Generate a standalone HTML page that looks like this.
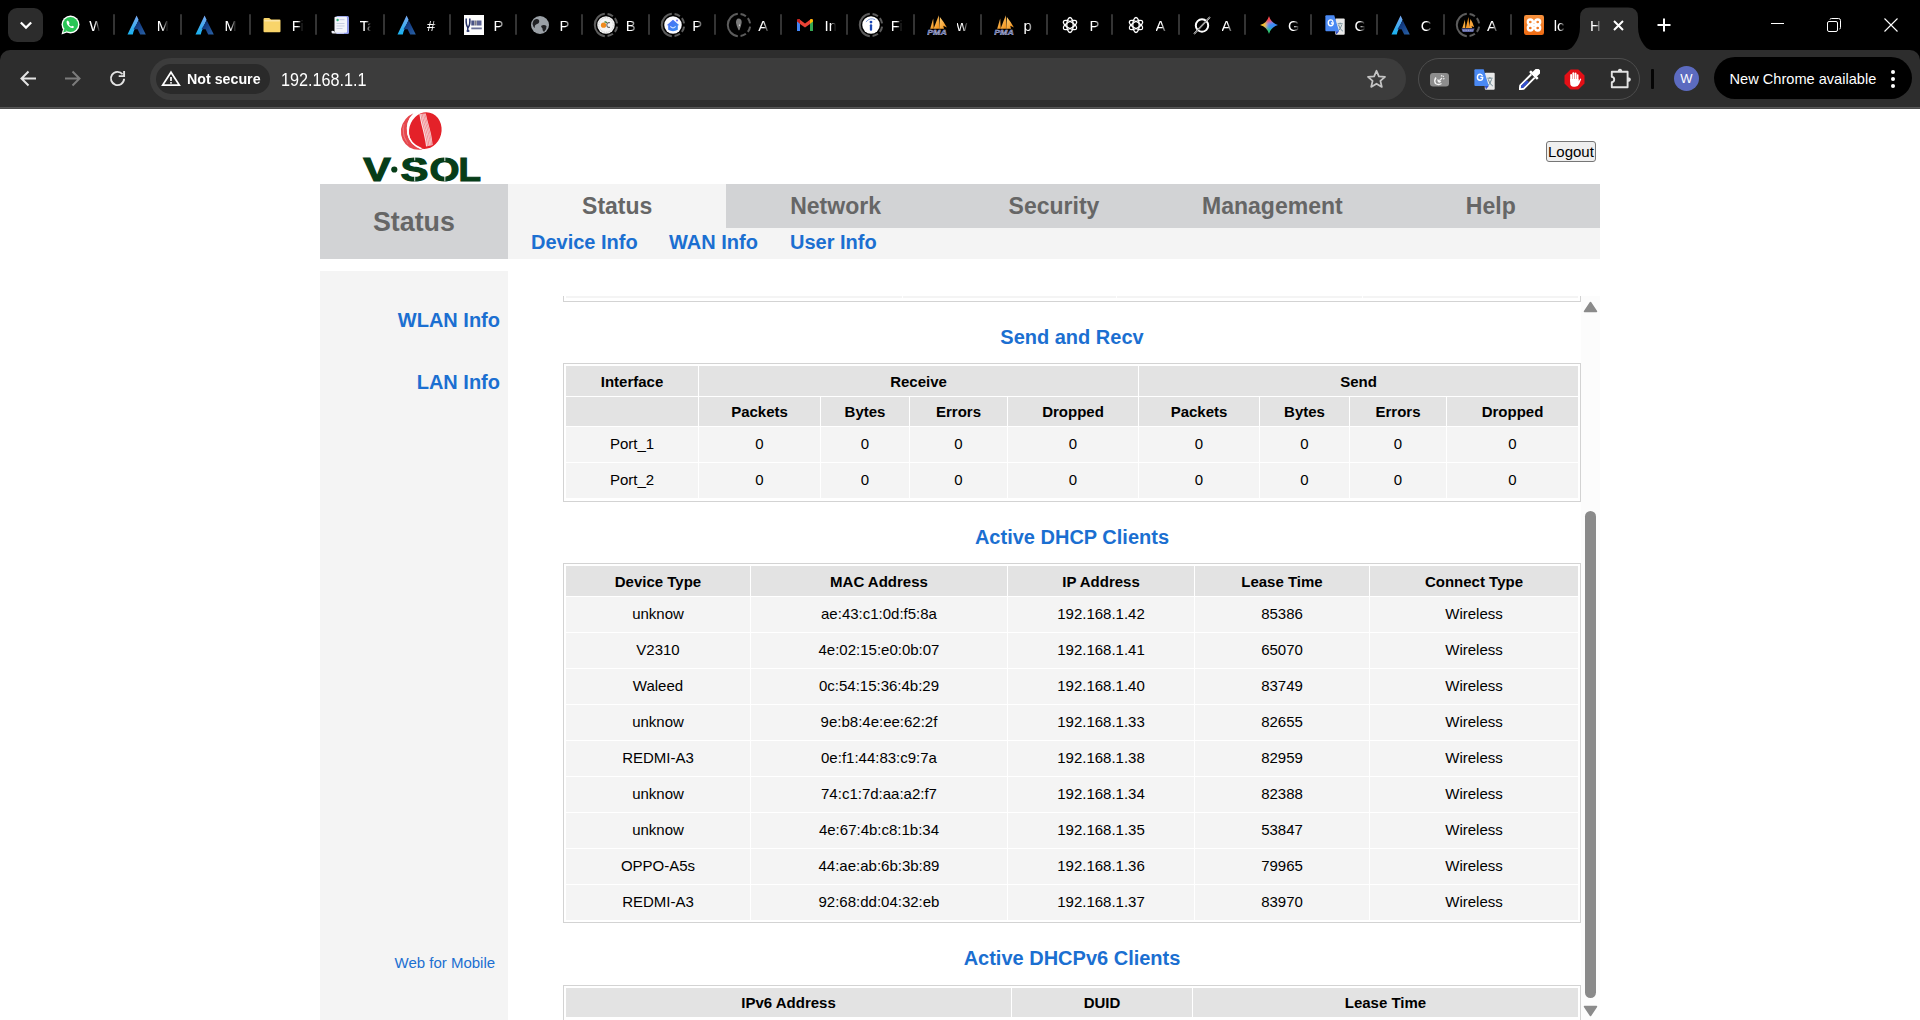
<!DOCTYPE html><html><head><meta charset='utf-8'><title>V-SOL</title><style>
*{box-sizing:border-box}
html,body{margin:0;padding:0}
body{width:1920px;height:1020px;overflow:hidden;position:relative;background:#fff;font-family:"Liberation Sans",sans-serif}
.a{position:absolute}
.sep{position:absolute;top:14px;width:2px;height:20.5px;background:#343434;border-radius:1px}
.tt{position:absolute;top:15.5px;font-size:15px;color:#fff;line-height:20px;white-space:nowrap;overflow:hidden;width:11px;-webkit-mask-image:linear-gradient(90deg,#000 50%,transparent 100%)}
.ic{position:absolute;top:15px;width:20px;height:20px}
table.t{position:absolute;border:1px solid #d3d3d3;padding:1px;border-spacing:1px;table-layout:fixed;font-size:15px;color:#000;border-collapse:separate}
table.t td{text-align:center;vertical-align:middle;padding:0;white-space:nowrap;overflow:hidden}
table.t td.h{background:#e3e3e3;font-weight:bold}
table.t td.d{background:#f4f4f4;padding-bottom:2px}
.ttl{position:absolute;width:1018px;text-align:center;font-size:20px;font-weight:bold;color:#1b6fd1;line-height:20px;white-space:nowrap}
.tx{position:absolute;white-space:nowrap}
</style></head><body><div class='a' style='left:0;top:0;width:1920px;height:62px;background:#000'></div><div class='a' style='left:8px;top:8px;width:35px;height:34px;background:#2c2c2c;border-radius:9px'></div><svg class='a' style='left:18px;top:17px' width='16' height='16' viewBox='0 0 16 16'><path d='M3.6 6.2 L8 10.6 L12.4 6.2' fill='none' stroke='#fff' stroke-width='2.2' stroke-linecap='square'/></svg><svg class='ic' style='left:59.6px' viewBox='0 0 20 20'><circle cx='10.5' cy='9.5' r='9' fill='#fff'/><path d='M1.5 19.5 L3 14 L7 17.5Z' fill='#fff'/><circle cx='10.5' cy='9.5' r='7.6' fill='#29c556'/><path d='M3.2 17.6 L4.3 13.8 L6.8 16.2Z' fill='#29c556'/><path d='M7.6 5.6c-.5.2-1 .9-1 1.6 0 2.2 2.6 5.2 5.4 5.9.8.2 1.6-.3 1.8-.9l.1-.6-1.8-.9-.8.8c-.9-.3-2-1.3-2.4-2.3l.7-.8-.8-1.9z' fill='#fff'/></svg><div class='tt' style='left:89.2px'>W</div><div class='sep' style='left:113.3px'></div><svg class='ic' style='left:127.1px' viewBox='0 0 20 20'><defs><linearGradient id='ag1' x1='0' y1='0' x2='0' y2='1'><stop offset='0' stop-color='#7aa7f2'/><stop offset='1' stop-color='#17b2ef'/></linearGradient><linearGradient id='ag2' x1='0' y1='0' x2='1' y2='1'><stop offset='0' stop-color='#06256a'/><stop offset='1' stop-color='#2a63a8'/></linearGradient></defs><path d='M9.6 0.5 L11.6 4.8 L6.5 16.8 L5.8 19.5 L0.5 19.5 Z' fill='url(#ag1)'/><path d='M11.8 5.5 L18.8 19.5 L13.2 19.5 L10.6 14.2 L6.4 14.2 Z' fill='url(#ag2)'/></svg><div class='tt' style='left:156.7px'>M</div><div class='sep' style='left:180.2px'></div><svg class='ic' style='left:195.0px' viewBox='0 0 20 20'><defs><linearGradient id='ag1' x1='0' y1='0' x2='0' y2='1'><stop offset='0' stop-color='#7aa7f2'/><stop offset='1' stop-color='#17b2ef'/></linearGradient><linearGradient id='ag2' x1='0' y1='0' x2='1' y2='1'><stop offset='0' stop-color='#06256a'/><stop offset='1' stop-color='#2a63a8'/></linearGradient></defs><path d='M9.6 0.5 L11.6 4.8 L6.5 16.8 L5.8 19.5 L0.5 19.5 Z' fill='url(#ag1)'/><path d='M11.8 5.5 L18.8 19.5 L13.2 19.5 L10.6 14.2 L6.4 14.2 Z' fill='url(#ag2)'/></svg><div class='tt' style='left:224.6px'>M</div><div class='sep' style='left:248.6px'></div><svg class='ic' style='left:262.1px' viewBox='0 0 20 20'><path d='M1.5 4.2 Q1.5 3 2.7 3 L7.2 3 L9 4.6 L17.5 4.6 Q18.5 4.6 18.5 5.6 L18.5 16.2 Q18.5 17.2 17.5 17.2 L2.5 17.2 Q1.5 17.2 1.5 16.2 Z' fill='#f8d46a'/><rect x='2.2' y='5.2' width='15.6' height='1.2' fill='#fbe9b7'/></svg><div class='tt' style='left:291.7px'>Fi</div><div class='sep' style='left:315.1px'></div><svg class='ic' style='left:330.0px' viewBox='0 0 20 20'><rect x='6' y='1' width='13' height='18' rx='1.5' fill='#8b97e6'/><rect x='4.5' y='1.8' width='12.5' height='16' rx='1' fill='#f2f4fb'/><path d='M1.5 16 Q4 15 5 17.5 L14 17.5 L14 18.5 L3 18.5 Q1.5 18.5 1.5 17Z' fill='#eef0f8'/><circle cx='7.6' cy='5' r='1.2' fill='#34b27d'/><rect x='9.5' y='4.2' width='5' height='1' fill='#c5cbe0'/><rect x='6.5' y='8' width='8' height='.9' fill='#c5cbe0'/><rect x='6.5' y='10.5' width='8' height='.9' fill='#c5cbe0'/><rect x='6.5' y='13' width='6' height='.9' fill='#c5cbe0'/></svg><div class='tt' style='left:359.6px'>Ta</div><div class='sep' style='left:383.4px'></div><svg class='ic' style='left:397.4px' viewBox='0 0 20 20'><defs><linearGradient id='ag1' x1='0' y1='0' x2='0' y2='1'><stop offset='0' stop-color='#7aa7f2'/><stop offset='1' stop-color='#17b2ef'/></linearGradient><linearGradient id='ag2' x1='0' y1='0' x2='1' y2='1'><stop offset='0' stop-color='#06256a'/><stop offset='1' stop-color='#2a63a8'/></linearGradient></defs><path d='M9.6 0.5 L11.6 4.8 L6.5 16.8 L5.8 19.5 L0.5 19.5 Z' fill='url(#ag1)'/><path d='M11.8 5.5 L18.8 19.5 L13.2 19.5 L10.6 14.2 L6.4 14.2 Z' fill='url(#ag2)'/></svg><div class='tt' style='left:427.0px'>#</div><div class='sep' style='left:449.0px'></div><svg class='ic' style='left:464.0px' viewBox='0 0 20 20'><defs><filter id='imf'><feGaussianBlur stdDeviation='.45'/></filter></defs><rect x='0' y='0' width='20' height='20' fill='#fdfdfd'/><g filter='url(#imf)'><path d='M2.2 3.5 Q1.8 10 3.8 12.5 L3.8 15.5 M5.8 3.5 Q6.3 10 4.2 12.5' stroke='#253066' stroke-width='1.5' fill='none'/><ellipse cx='4' cy='16' rx='1.6' ry='1' fill='#253066'/><rect x='7.3' y='5.5' width='3' height='5' fill='#4a5386'/><rect x='10.5' y='5.5' width='2.2' height='5' fill='#7a7a86'/><rect x='13' y='5.5' width='4.5' height='5' fill='#5b6494'/><rect x='7.3' y='12.5' width='10.5' height='1.8' fill='#6a7098'/></g></svg><div class='tt' style='left:493.6px'>P</div><div class='sep' style='left:515.1px'></div><svg class='ic' style='left:530.0px' viewBox='0 0 20 20'><circle cx='10' cy='10' r='9' fill='#9aa0a6'/><path d='M4 5 Q7 3 9 5 Q10 8 7 9 Q4 10 5 13 Q3 12 2.5 9 Q2.8 6.5 4 5Z M11 11 Q14 9 16.5 11 Q17 14 14 17 Q12 15 12.5 13.5 Q11.5 12.5 11 11Z' fill='#202124'/></svg><div class='tt' style='left:559.6px'>P</div><div class='sep' style='left:581.2px'></div><svg class='a' style='left:593.2px;top:12px' width='26' height='26' viewBox='-3 -3 26 26'><path d='M8.83 21.14 A11.2 11.2 0 0 1 8.83 -1.14 M11.56 -1.09 A11.2 11.2 0 0 1 16.90 1.17 M18.83 3.10 A11.2 11.2 0 0 1 21.09 8.44 M21.09 11.56 A11.2 11.2 0 0 1 18.83 16.90 M16.90 18.83 A11.2 11.2 0 0 1 11.56 21.09' fill='none' stroke='#5c5c5c' stroke-width='2'/><g transform='translate(10 10) scale(.875) translate(-10 -10)'><circle cx='10' cy='10' r='10' fill='#f4f4f4'/><circle cx='10' cy='10' r='8.3' fill='none' stroke='#b8b8b8' stroke-width='1' stroke-dasharray='1 1'/><circle cx='7.2' cy='10.2' r='3' fill='#f08a1c'/><path d='M8.2 6.8 Q9.8 6 10.8 7.8' stroke='#3d7a2a' stroke-width='1.4' fill='none'/><path d='M14.5 7.5 Q11 6.5 11 10 Q11 13.5 14.5 12.5' stroke='#666' stroke-width='1.3' fill='none'/></g></svg><div class='tt' style='left:625.8px'>B</div><div class='sep' style='left:648.3px'></div><svg class='a' style='left:659.6px;top:12px' width='26' height='26' viewBox='-3 -3 26 26'><path d='M8.83 21.14 A11.2 11.2 0 0 1 8.83 -1.14 M11.56 -1.09 A11.2 11.2 0 0 1 16.90 1.17 M18.83 3.10 A11.2 11.2 0 0 1 21.09 8.44 M21.09 11.56 A11.2 11.2 0 0 1 18.83 16.90 M16.90 18.83 A11.2 11.2 0 0 1 11.56 21.09' fill='none' stroke='#5c5c5c' stroke-width='2'/><g transform='translate(10 10) scale(.875) translate(-10 -10)'><circle cx='10' cy='10' r='10' fill='#fbfbff'/><defs><linearGradient id='hg' x1='0' y1='0' x2='1' y2='1'><stop offset='0' stop-color='#4b6cf7'/><stop offset='1' stop-color='#3b8ff0'/></linearGradient></defs><path d='M2.8 10.2 L10 4 L17.2 10.2 L15.5 10.2 L15.5 15.5 Q10 18.5 4.5 15.5 L4.5 10.2Z' fill='url(#hg)'/><circle cx='14.6' cy='4.8' r='1.1' fill='#6b6cf0'/><path d='M7 11.5 Q10 15 13 11.5' stroke='#cfe0ff' stroke-width='1.3' fill='none'/></g></svg><div class='tt' style='left:692.2px'>P</div><div class='sep' style='left:714.3px'></div><svg class='a' style='left:725.6px;top:12px' width='26' height='26' viewBox='-3 -3 26 26'><path d='M8.83 21.14 A11.2 11.2 0 0 1 8.83 -1.14 M11.56 -1.09 A11.2 11.2 0 0 1 16.90 1.17 M18.83 3.10 A11.2 11.2 0 0 1 21.09 8.44 M21.09 11.56 A11.2 11.2 0 0 1 18.83 16.90 M16.90 18.83 A11.2 11.2 0 0 1 11.56 21.09' fill='none' stroke='#5c5c5c' stroke-width='2'/><g transform='translate(10 10) scale(.875) translate(-10 -10)'><path d='M9.4 2.5 Q13.5 2.8 13 7.5 Q12.5 11 10.6 15.8 Q9.8 16.5 9.3 15.5 Q7 10.5 6.6 7.3 Q6.5 2.7 9.4 2.5Z' fill='#7a7a7a'/><path d='M10.5 8.5 L11.3 11.5 L9.8 10.5Z' fill='#e0e0e0'/></g></svg><div class='tt' style='left:758.2px'>A</div><div class='sep' style='left:780.3px'></div><svg class='ic' style='left:795.0px' viewBox='0 0 20 20'><path d='M2 5.5 L2 16 L5 16 L5 9 L10 12.5 L15 9 L15 16 L18 16 L18 5.5 Q18 3.5 16 4 L10 8.5 L4 4 Q2 3.5 2 5.5Z' fill='#ea4335'/><path d='M2 5.5 L2 16 L5 16 L5 8.5Z' fill='#4285f4'/><path d='M15 8.5 L15 16 L18 16 L18 5.5Z' fill='#34a853'/><path d='M15 8.7 L18 6.4 L18 5.5 Q18 3.5 16 4 L15 4.8Z' fill='#fbbc04'/><path d='M2 5.5 Q2 3.5 4 4 L5 4.8 L5 8.7 L2 6.4Z' fill='#c5221f'/></svg><div class='tt' style='left:824.6px'>In</div><div class='sep' style='left:846.4px'></div><svg class='a' style='left:858.1px;top:12px' width='26' height='26' viewBox='-3 -3 26 26'><path d='M8.83 21.14 A11.2 11.2 0 0 1 8.83 -1.14 M11.56 -1.09 A11.2 11.2 0 0 1 16.90 1.17 M18.83 3.10 A11.2 11.2 0 0 1 21.09 8.44 M21.09 11.56 A11.2 11.2 0 0 1 18.83 16.90 M16.90 18.83 A11.2 11.2 0 0 1 11.56 21.09' fill='none' stroke='#5c5c5c' stroke-width='2'/><g transform='translate(10 10) scale(.875) translate(-10 -10)'><circle cx='10' cy='10' r='10' fill='#fff'/><circle cx='10' cy='6.6' r='1.6' fill='#1c49b5'/><rect x='8.7' y='9' width='2.6' height='7.5' rx='1.2' fill='#1c49b5'/><path d='M4.2 6.5 Q9 0.8 14.8 4' stroke='#6f8fd8' stroke-width='1' fill='none'/></g></svg><div class='tt' style='left:890.7px'>Fi</div><div class='sep' style='left:913.2px'></div><svg class='ic' style='left:927.0px' viewBox='0 0 20 20'><defs><linearGradient id='pmg' x1='0' y1='0' x2='1' y2='1'><stop offset='0' stop-color='#ffd27a'/><stop offset='1' stop-color='#f08a10'/></linearGradient></defs><path d='M3.2 13.8 L6.2 3.4 L6.8 13.8Z' fill='url(#pmg)'/><path d='M6.6 13.8 L11.8 0.3 L12.6 13.8Z' fill='url(#pmg)'/><path d='M12.4 13.8 L12.9 1.9 Q17 7 19.9 12.4 L16.3 10.8 L17 13.8Z' fill='url(#pmg)'/><text x='0.2' y='19.6' font-family='Liberation Sans' font-size='7.4' font-weight='bold' font-style='italic' fill='#4a5498' stroke='#c8cce6' stroke-width='.35' textLength='19.6' lengthAdjust='spacingAndGlyphs'>PMA</text></svg><div class='tt' style='left:956.6px'>w</div><div class='sep' style='left:979.5px'></div><svg class='ic' style='left:993.8px' viewBox='0 0 20 20'><defs><linearGradient id='pmg' x1='0' y1='0' x2='1' y2='1'><stop offset='0' stop-color='#ffd27a'/><stop offset='1' stop-color='#f08a10'/></linearGradient></defs><path d='M3.2 13.8 L6.2 3.4 L6.8 13.8Z' fill='url(#pmg)'/><path d='M6.6 13.8 L11.8 0.3 L12.6 13.8Z' fill='url(#pmg)'/><path d='M12.4 13.8 L12.9 1.9 Q17 7 19.9 12.4 L16.3 10.8 L17 13.8Z' fill='url(#pmg)'/><text x='0.2' y='19.6' font-family='Liberation Sans' font-size='7.4' font-weight='bold' font-style='italic' fill='#4a5498' stroke='#c8cce6' stroke-width='.35' textLength='19.6' lengthAdjust='spacingAndGlyphs'>PMA</text></svg><div class='tt' style='left:1023.4px'>p</div><div class='sep' style='left:1045.6px'></div><svg class='ic' style='left:1059.9px' viewBox='0 0 20 20'><g fill='none' stroke='#fff' stroke-width='1.3'><ellipse cx='10' cy='10' rx='3.2' ry='7.5'/><ellipse cx='10' cy='10' rx='3.2' ry='7.5' transform='rotate(60 10 10)'/><ellipse cx='10' cy='10' rx='3.2' ry='7.5' transform='rotate(120 10 10)'/></g></svg><div class='tt' style='left:1089.5px'>P</div><div class='sep' style='left:1111.4px'></div><svg class='ic' style='left:1125.9px' viewBox='0 0 20 20'><g fill='none' stroke='#fff' stroke-width='1.3'><ellipse cx='10' cy='10' rx='3.2' ry='7.5'/><ellipse cx='10' cy='10' rx='3.2' ry='7.5' transform='rotate(60 10 10)'/><ellipse cx='10' cy='10' rx='3.2' ry='7.5' transform='rotate(120 10 10)'/></g></svg><div class='tt' style='left:1155.5px'>A</div><div class='sep' style='left:1178.0px'></div><svg class='ic' style='left:1192.0px' viewBox='0 0 20 20'><circle cx='10' cy='10.5' r='6.2' fill='none' stroke='#fff' stroke-width='2'/><path d='M2 19 L18 2' stroke='#fff' stroke-width='1.6'/><path d='M2 19 L18 2' stroke='#000' stroke-width='.6'/></svg><div class='tt' style='left:1221.6px'>A</div><div class='sep' style='left:1244.4px'></div><svg class='ic' style='left:1258.5px' viewBox='0 0 20 20'><defs><clipPath id='gmc'><path d='M10 1 Q12 8 19 10 Q12 12 10 19 Q8 12 1 10 Q8 8 10 1Z'/></clipPath><filter id='gmf' x='-20%' y='-20%' width='140%' height='140%'><feGaussianBlur stdDeviation='1.6'/></filter></defs><g clip-path='url(#gmc)'><g filter='url(#gmf)'><path d='M0 0 L20 0 L10 10Z' fill='#f4474a'/><path d='M0 0 L0 20 L10 10Z' fill='#f7c12a'/><path d='M0 20 L20 20 L10 10Z' fill='#2fc26b'/><path d='M20 0 L20 20 L10 10Z' fill='#3a8cf6'/><circle cx='11' cy='10.5' r='3.5' fill='#3a8cf6'/></g></g></svg><div class='tt' style='left:1288.1px'>G</div><div class='sep' style='left:1310.0px'></div><svg class='ic' style='left:1324.8px' viewBox='0 0 20 20'><svg viewBox='0 0 21 21' width='20' height='20'><rect x='10.8' y='3.8' width='9.9' height='17' rx='1' fill='#e9e9e9'/><path d='M13.3 9.2 L18.6 9.2 M15.9 8 L15.9 9.2 M14.2 10.3 Q15.6 15.5 18.8 17 M17.6 10.3 Q16.1 15.5 13.4 17' stroke='#6f8a96' stroke-width='1' fill='none'/><path d='M1.4 0.2 L9.7 0.2 L14.75 17 L1.4 17 Q0.4 17 0.4 16 L0.4 1.2 Q0.4 0.2 1.4 0.2Z' fill='#4a89f3'/><path d='M10.8 17 L14.75 17 L12 20.6Z' fill='#3450c8'/><path d='M8.4 7.2 Q7.9 5.2 6.1 5.2 Q3.4 5.2 3.4 8.2 Q3.4 11.3 6.1 11.3 Q8.6 11.3 8.7 8.4 L6.3 8.4' stroke='#fff' stroke-width='1.4' fill='none'/></svg></svg><div class='tt' style='left:1354.4px'>G</div><div class='sep' style='left:1376.4px'></div><svg class='ic' style='left:1391.1px' viewBox='0 0 20 20'><defs><linearGradient id='ag1' x1='0' y1='0' x2='0' y2='1'><stop offset='0' stop-color='#7aa7f2'/><stop offset='1' stop-color='#17b2ef'/></linearGradient><linearGradient id='ag2' x1='0' y1='0' x2='1' y2='1'><stop offset='0' stop-color='#06256a'/><stop offset='1' stop-color='#2a63a8'/></linearGradient></defs><path d='M9.6 0.5 L11.6 4.8 L6.5 16.8 L5.8 19.5 L0.5 19.5 Z' fill='url(#ag1)'/><path d='M11.8 5.5 L18.8 19.5 L13.2 19.5 L10.6 14.2 L6.4 14.2 Z' fill='url(#ag2)'/></svg><div class='tt' style='left:1420.7px'>C</div><div class='sep' style='left:1443.2px'></div><svg class='a' style='left:1454.5px;top:12px' width='26' height='26' viewBox='-3 -3 26 26'><path d='M8.83 21.14 A11.2 11.2 0 0 1 8.83 -1.14 M11.56 -1.09 A11.2 11.2 0 0 1 16.90 1.17 M18.83 3.10 A11.2 11.2 0 0 1 21.09 8.44 M21.09 11.56 A11.2 11.2 0 0 1 18.83 16.90 M16.90 18.83 A11.2 11.2 0 0 1 11.56 21.09' fill='none' stroke='#5c5c5c' stroke-width='2'/><g transform='translate(10 10) scale(.875) translate(-10 -10)'><path d='M3.5 13.5 L6.5 3.8 L7 13.5Z' fill='#f6a83c'/><path d='M7.5 13.5 L10.5 0.8 L11.6 13.5Z' fill='#f49a28'/><path d='M11 13.5 L12.8 3 Q15.5 7 17 12.5 L14 11 L14.8 13.5Z' fill='#f7a43a'/><path d='M2.5 14 L17.5 14 L16 18 L4 18Z' fill='#6a72b8' opacity='.9'/><path d='M4 16 L16 16' stroke='#c9cde8' stroke-width='.8' stroke-dasharray='1.2 .8'/></g></svg><div class='tt' style='left:1487.1px'>A</div><div class='sep' style='left:1509.5px'></div><svg class='ic' style='left:1524.1px' viewBox='0 0 20 20'><defs><linearGradient id='xg' x1='0' y1='0' x2='0' y2='1'><stop offset='0' stop-color='#f7923e'/><stop offset='1' stop-color='#ee6a12'/></linearGradient></defs><rect x='0' y='0' width='20' height='20' rx='2.2' fill='url(#xg)'/><g fill='none' stroke='#fff' stroke-width='2.3'><circle cx='6.3' cy='7' r='2.5'/><circle cx='13.7' cy='7' r='2.5'/><circle cx='6.3' cy='13' r='2.5'/><circle cx='13.7' cy='13' r='2.5'/><path d='M8.8 7 L11.2 7 M8.8 13 L11.2 13 M6.3 9.5 L6.3 10.5 M13.7 9.5 L13.7 10.5'/></g><path d='M8.2 9 L11.8 9 L11.8 11 L8.2 11Z' fill='#fff'/></svg><div class='tt' style='left:1553.7px'>lc</div><svg class='a' style='left:1560px;top:7px' width='100' height='44' viewBox='0 0 100 44'><path d='M0 44 Q10 44 14 38 Q20 30 20 20 L20 10 Q20 0.5 30 0.5 L68 0.5 Q78 0.5 78 10 L78 20 Q78 30 84 38 Q88 44 98 44 Z' fill='#2d2d2d'/></svg><div class='tt' style='left:1590px;width:11px'>H</div><svg class='a' style='left:1612px;top:19px' width='13' height='13' viewBox='0 0 13 13'><path d='M2 2 L11 11 M11 2 L2 11' stroke='#fff' stroke-width='2'/></svg><svg class='a' style='left:1657px;top:18px' width='14' height='14' viewBox='0 0 14 14'><path d='M7 0.5 V13.5 M0.5 7 H13.5' stroke='#fff' stroke-width='2'/></svg><div class='a' style='left:1771px;top:23px;width:13px;height:1px;background:#fff'></div><svg class='a' style='left:1826px;top:17px' width='16' height='16' viewBox='0 0 16 16'><rect x='1.5' y='4.5' width='10' height='10' rx='1.5' fill='none' stroke='#fff' stroke-width='1'/><path d='M4 2.5 Q4 1.5 5.5 1.5 L12.5 1.5 Q14.5 1.5 14.5 3.5 L14.5 10.5 Q14.5 12 13.5 12' fill='none' stroke='#fff' stroke-width='1'/></svg><svg class='a' style='left:1883px;top:17px' width='16' height='16' viewBox='0 0 16 16'><path d='M1.5 1.5 L14.5 14.5 M14.5 1.5 L1.5 14.5' stroke='#fff' stroke-width='1.1'/></svg><div class='a' style='left:0;top:50px;width:1920px;height:57px;background:#2d2d2d;border-radius:10px 10px 0 0'></div><div class='a' style='left:0;top:107px;width:1920px;height:1px;background:#565656'></div><div class='a' style='left:0;top:108px;width:1920px;height:1px;background:#4b4b4b'></div><svg class='a' style='left:18.8px;top:69px' width='19' height='19' viewBox='0 0 19 19'><path d='M17 9.5 H3 M9.5 2.5 L2.5 9.5 L9.5 16.5' fill='none' stroke='#e3e3e3' stroke-width='2'/></svg><svg class='a' style='left:63px;top:69px' width='19' height='19' viewBox='0 0 19 19'><path d='M2 9.5 H16 M9.5 2.5 L16.5 9.5 L9.5 16.5' fill='none' stroke='#7c7c7c' stroke-width='2'/></svg><svg class='a' style='left:108px;top:69px' width='19' height='19' viewBox='0 0 19 19'><path d='M14.56 5.26 A6.6 6.6 0 1 0 16.1 9.73' fill='none' stroke='#e3e3e3' stroke-width='1.9'/><path d='M16.1 1.9 L16.1 7.1 L10.7 7.1' fill='none' stroke='#e3e3e3' stroke-width='1.9'/></svg><div class='a' style='left:150px;top:58px;width:1256px;height:42px;background:#3c3c3c;border-radius:21px'></div><div class='a' style='left:156px;top:64px;width:114px;height:30px;background:#2a2a2a;border-radius:15px'></div><svg class='a' style='left:161px;top:70px' width='20' height='17' viewBox='0 0 20 17'><path d='M10 2.2 L18.3 15.1 L1.7 15.1 Z' fill='none' stroke='#fff' stroke-width='1.75' stroke-linejoin='miter'/><rect x='9.15' y='7' width='1.7' height='4' fill='#fff'/><rect x='9.15' y='12.1' width='1.7' height='1.5' fill='#fff'/></svg><div class='tx' style='left:186.6px;top:71.06px;font-size:15.4px;line-height:15.4px;color:#fff;font-weight:bold;transform:scaleX(0.925);transform-origin:0 0'>Not secure</div><div class='tx' style='left:280.6px;top:71.50px;font-size:17.6px;line-height:17.6px;color:#fff;font-weight:normal;transform:scaleX(0.92);transform-origin:0 0'>192.168.1.1</div><svg class='a' style='left:1366px;top:69px' width='21' height='20' viewBox='0 0 21 20'><path d='M10.5 1.8 L12.9 7.4 L19 7.9 L14.4 11.9 L15.8 17.9 L10.5 14.7 L5.2 17.9 L6.6 11.9 L2 7.9 L8.1 7.4 Z' fill='none' stroke='#c4c4c4' stroke-width='1.8' stroke-linejoin='round'/></svg><div class='a' style='left:1418px;top:58px;width:222px;height:42px;border:1px solid #4d4d4d;border-radius:21px'></div><svg class='a' style='left:1430px;top:73px' width='19' height='14' viewBox='0 0 19 14'><rect x='0' y='0' width='19' height='13.5' rx='3' fill='#8d8d8d'/><path d='M6 4.5 Q3.8 7.5 5.5 10.5 Q8.5 12.5 11.5 10.5' fill='none' stroke='#f2f2f2' stroke-width='1.5'/><path d='M7.5 6 Q6.8 8.5 8.5 9.5 Q10.5 10 11.3 8.5Z' fill='#f2f2f2'/><path d='M9.5 7.5 L12 5 M11 3.3 L12.2 2.2 M13 6 L14.5 5.5 M12.8 3.8 L13.8 3' stroke='#f2f2f2' stroke-width='1.1'/></svg><svg class='a' style='left:1474px;top:69px' width='21' height='21' viewBox='0 0 20 20'><svg viewBox='0 0 21 21' width='20' height='20'><rect x='10.8' y='3.8' width='9.9' height='17' rx='1' fill='#e9e9e9'/><path d='M13.3 9.2 L18.6 9.2 M15.9 8 L15.9 9.2 M14.2 10.3 Q15.6 15.5 18.8 17 M17.6 10.3 Q16.1 15.5 13.4 17' stroke='#6f8a96' stroke-width='1' fill='none'/><path d='M1.4 0.2 L9.7 0.2 L14.75 17 L1.4 17 Q0.4 17 0.4 16 L0.4 1.2 Q0.4 0.2 1.4 0.2Z' fill='#4a89f3'/><path d='M10.8 17 L14.75 17 L12 20.6Z' fill='#3450c8'/><path d='M8.4 7.2 Q7.9 5.2 6.1 5.2 Q3.4 5.2 3.4 8.2 Q3.4 11.3 6.1 11.3 Q8.6 11.3 8.7 8.4 L6.3 8.4' stroke='#fff' stroke-width='1.4' fill='none'/></svg></svg><svg class='a' style='left:1519px;top:69px' width='21' height='21' viewBox='0 0 21 21'><g transform='rotate(45 10.5 10.5)'><rect x='7.4' y='-3.4' width='6.2' height='6.8' rx='.6' fill='#fff'/><rect x='5' y='3' width='11' height='2.6' rx='.8' fill='#fff'/><path d='M8.1 5.5 L8.1 21.2 L10.5 24.3 L12.9 21.2 L12.9 5.5' fill='#2d2d2d' stroke='#fff' stroke-width='1.9' stroke-linejoin='round'/><path d='M9.1 12.8 L11.9 12.8 L11.9 20.9 L10.5 22.7 L9.1 20.9Z' fill='#3451d1'/></g></svg><svg class='a' style='left:1564px;top:69px' width='21' height='21' viewBox='0 0 21 21'><path d='M6.6 0.5 L14.4 0.5 L20.5 6.6 L20.5 14.4 L14.4 20.5 L6.6 20.5 L0.5 14.4 L0.5 6.6Z' fill='#e30f16'/><g fill='#fff'><rect x='6.2' y='5' width='1.9' height='8' rx='.95'/><rect x='8.4' y='3.3' width='1.9' height='9' rx='.95'/><rect x='10.6' y='3.6' width='1.9' height='9' rx='.95'/><rect x='12.7' y='5.2' width='1.8' height='8' rx='.9'/><path d='M6.2 10 L14.5 10 L14.5 12.5 L16.2 9.8 Q17 9.3 17.2 10.2 L15.2 15 Q14 17.8 11 17.8 L9.6 17.8 Q6.2 17.8 6.2 14Z'/></g></svg><svg class='a' style='left:1609px;top:68px' width='24' height='23' viewBox='0 0 24 23'><path d='M2.8 3.8 L18.6 3.8 L18.6 19.2 L2.8 19.2 L2.8 14.2 Q5.2 13.8 5.2 11.5 Q5.2 9.2 2.8 8.8 Z' fill='none' stroke='#e3e3e3' stroke-width='1.9' stroke-linejoin='round'/><path d='M8.8 3.6 Q8.8 0.8 11 0.8 Q13.2 0.8 13.2 3.6Z' fill='#e3e3e3'/><path d='M18.5 9.2 Q21.8 9.2 21.8 11.5 Q21.8 13.8 18.5 13.8Z' fill='#e3e3e3'/></svg><div class='a' style='left:1651px;top:69px;width:3px;height:20px;background:#050505;border-radius:1px'></div><div class='a' style='left:1674px;top:66px;width:25px;height:25px;border-radius:50%;background:#5c6bc0'></div><div class='tx' style='left:1674px;top:71px;width:25px;text-align:center;font-size:13px;line-height:15px;color:#fff'>W</div><div class='a' style='left:1714px;top:57px;width:198px;height:42px;background:#000;border-radius:21px'></div><div class='tx' style='left:1729.5px;top:72.24px;font-size:14.6px;line-height:14.6px;color:#fff;font-weight:normal;'>New Chrome available</div><div class='a' style='left:1890.5px;top:69.8px;width:4px;height:4px;border-radius:50%;background:#fff'></div><div class='a' style='left:1890.5px;top:76.6px;width:4px;height:4px;border-radius:50%;background:#fff'></div><div class='a' style='left:1890.5px;top:83.5px;width:4px;height:4px;border-radius:50%;background:#fff'></div><svg class='a' style='left:396px;top:108px' width='50' height='46' viewBox='0 0 50 46'>
<path d='M17.5 5.3 Q7.5 9.5 5 21 Q4 33 13.5 39.5 Q19 42.5 26.5 41.5 Q14.5 38.5 11.2 26 Q9 13.5 17.5 5.3 Z' fill='#e6474d'/>
<path d='M8 16 Q6 26 10 33 M7 20 Q6.5 29 12 36' stroke='#f08a8e' stroke-width='.7' fill='none' opacity='.8'/>
<ellipse cx='29.3' cy='22.6' rx='16.2' ry='18.4' transform='rotate(14 29.3 22.6)' fill='#e42129'/>
<path d='M19 5.2 Q10.5 13 11.8 25 Q13.5 36 25.5 40.8' stroke='#fff' stroke-width='1.6' fill='none'/>
<path d='M23.4 6 C24 12 26.5 20 28 27 C29 32 29.8 35 30 38.5 L36.6 37 C36.2 32 35.5 29 35 26 C33.5 19 31 12 29.8 5.5 Z' fill='#fbe1e2'/>
<path d='M24.81 5.89 C25.54 12.0 28.04 19.78 29.54 26.78 C30.43 31.34 31.21 34.34 31.45 38.17 M26.22 5.78 C27.08 12.0 29.58 19.56 31.08 26.56 C31.86 30.68 32.62 33.68 32.9 37.84 M27.62 5.67 C28.62 12.0 31.12 19.34 32.62 26.34 C33.29 30.02 34.02 33.02 34.36 37.51 M28.9 5.57 C30.02 12.0 32.52 19.14 34.02 26.14 C34.59 29.42 35.3 32.42 35.68 37.21 ' stroke='#e9646a' stroke-width='.65' fill='none'/>
</svg><svg class='a' style='left:360px;top:154px' width='124' height='30' viewBox='0 0 124 30'>
<g font-family='Liberation Sans' font-weight='bold' font-size='32.6' fill='#063d18' stroke='#063d18' stroke-width='1.1' lengthAdjust='spacingAndGlyphs'>
<text x='3.2' y='26.5' textLength='27.6' lengthAdjust='spacingAndGlyphs'>V</text>
<text x='40.6' y='26.5' textLength='28' lengthAdjust='spacingAndGlyphs'>S</text>
<text x='69.6' y='26.5' textLength='30' lengthAdjust='spacingAndGlyphs'>O</text>
<text x='98.4' y='26.5' textLength='22.5' lengthAdjust='spacingAndGlyphs'>L</text>
</g>
<circle cx='34.3' cy='15.5' r='3.1' fill='#063d18'/>
<rect x='54.3' y='2' width='0.9' height='4.5' fill='#fff'/><rect x='54.3' y='21.5' width='0.9' height='5.8' fill='#fff'/>
<rect x='84.4' y='2' width='0.9' height='5' fill='#fff'/><rect x='84.4' y='21.5' width='0.9' height='5.8' fill='#fff'/>
</svg><div class='a' style='left:1546px;top:141px;width:50px;height:21px;border:1px solid #767676;border-radius:3px;background:#efefef'></div><div class='tx' style='left:1548px;top:143.80px;font-size:15px;line-height:15px;color:#000;font-weight:normal;'>Logout</div><div class='a' style='left:320px;top:184px;width:188px;height:75px;background:#d2d3d5'></div><div class='tx' style='left:373px;top:208.91px;font-size:26.8px;line-height:26.8px;color:#666;font-weight:bold;'>Status</div><div class='a' style='left:508px;top:184px;width:1092px;height:44px;background:#d2d3d5'></div><div class='a' style='left:508px;top:184px;width:218px;height:44px;background:#f4f4f4'></div><div class='a' style='left:508px;top:228px;width:1092px;height:31px;background:#f4f4f4'></div><div class='tx' style='left:508.0px;width:218.4px;text-align:center;top:195.03px;font-size:23px;line-height:23px;font-weight:bold;color:#666'>Status</div><div class='tx' style='left:726.4px;width:218.4px;text-align:center;top:195.03px;font-size:23px;line-height:23px;font-weight:bold;color:#666'>Network</div><div class='tx' style='left:944.8px;width:218.4px;text-align:center;top:195.03px;font-size:23px;line-height:23px;font-weight:bold;color:#666'>Security</div><div class='tx' style='left:1163.2px;width:218.4px;text-align:center;top:195.03px;font-size:23px;line-height:23px;font-weight:bold;color:#666'>Management</div><div class='tx' style='left:1381.6px;width:218.4px;text-align:center;top:195.03px;font-size:23px;line-height:23px;font-weight:bold;color:#666'>Help</div><div class='tx' style='left:531px;top:231.57px;font-size:20px;line-height:20px;color:#1b6fd1;font-weight:bold;'>Device Info</div><div class='tx' style='left:669px;top:231.57px;font-size:20px;line-height:20px;color:#1b6fd1;font-weight:bold;'>WAN Info</div><div class='tx' style='left:790px;top:231.57px;font-size:20px;line-height:20px;color:#1b6fd1;font-weight:bold;'>User Info</div><div class='a' style='left:320px;top:271px;width:188px;height:749px;background:#f4f4f4'></div><div class='tx' style='left:320px;width:180px;text-align:right;top:310.07px;font-size:20px;line-height:20px;font-weight:bold;color:#1b6fd1'>WLAN Info</div><div class='tx' style='left:320px;width:180px;text-align:right;top:371.77px;font-size:20px;line-height:20px;font-weight:bold;color:#1b6fd1'>LAN Info</div><div class='tx' style='left:394.5px;top:955.00px;font-size:15px;line-height:15px;color:#1b6fd1;font-weight:normal;'>Web for Mobile</div><div class='a' style='left:508px;top:296px;width:1092px;height:724px;overflow:hidden;background:#fff'><table class='t' style='left:55px;top:-36px;width:1018px;padding-bottom:2px'><colgroup><col style='width:336px'><col style='width:213px'><col style='width:245px'><col style='width:215px'></colgroup><tr style='height:35px'><td class='d' style='height:35px'></td><td class='d' style='height:35px'></td><td class='d' style='height:35px'></td><td class='d' style='height:35px'></td></tr></table><div class='ttl' style='left:55px;top:30.87px'>Send and Recv</div><table class='t' style='left:55px;top:67px;width:1018px;padding-bottom:2px'><colgroup><col style='width:132px'><col style='width:121px'><col style='width:88px'><col style='width:97px'><col style='width:130px'><col style='width:120px'><col style='width:89px'><col style='width:96px'><col style='width:131px'></colgroup><tr style='height:30px'><td class='h' style='height:30px'>Interface</td><td class='h' colspan='4' style='height:30px'>Receive</td><td class='h' colspan='4' style='height:30px'>Send</td></tr><tr style='height:29px'><td class='h' style='height:29px'></td><td class='h' style='height:29px'>Packets</td><td class='h' style='height:29px'>Bytes</td><td class='h' style='height:29px'>Errors</td><td class='h' style='height:29px'>Dropped</td><td class='h' style='height:29px'>Packets</td><td class='h' style='height:29px'>Bytes</td><td class='h' style='height:29px'>Errors</td><td class='h' style='height:29px'>Dropped</td></tr><tr style='height:35px'><td class='d' style='height:35px'>Port_1</td><td class='d' style='height:35px'>0</td><td class='d' style='height:35px'>0</td><td class='d' style='height:35px'>0</td><td class='d' style='height:35px'>0</td><td class='d' style='height:35px'>0</td><td class='d' style='height:35px'>0</td><td class='d' style='height:35px'>0</td><td class='d' style='height:35px'>0</td></tr><tr style='height:35px'><td class='d' style='height:35px'>Port_2</td><td class='d' style='height:35px'>0</td><td class='d' style='height:35px'>0</td><td class='d' style='height:35px'>0</td><td class='d' style='height:35px'>0</td><td class='d' style='height:35px'>0</td><td class='d' style='height:35px'>0</td><td class='d' style='height:35px'>0</td><td class='d' style='height:35px'>0</td></tr></table><div class='ttl' style='left:55px;top:231.07px'>Active DHCP Clients</div><table class='t' style='left:55px;top:267px;width:1018px;padding-bottom:1px'><colgroup><col style='width:184px'><col style='width:256px'><col style='width:186px'><col style='width:174px'><col style='width:208px'></colgroup><tr style='height:30px'><td class='h' style='height:30px'>Device Type</td><td class='h' style='height:30px'>MAC Address</td><td class='h' style='height:30px'>IP Address</td><td class='h' style='height:30px'>Lease Time</td><td class='h' style='height:30px'>Connect Type</td></tr><tr style='height:35px'><td class='d' style='height:35px'>unknow</td><td class='d' style='height:35px'>ae:43:c1:0d:f5:8a</td><td class='d' style='height:35px'>192.168.1.42</td><td class='d' style='height:35px'>85386</td><td class='d' style='height:35px'>Wireless</td></tr><tr style='height:35px'><td class='d' style='height:35px'>V2310</td><td class='d' style='height:35px'>4e:02:15:e0:0b:07</td><td class='d' style='height:35px'>192.168.1.41</td><td class='d' style='height:35px'>65070</td><td class='d' style='height:35px'>Wireless</td></tr><tr style='height:35px'><td class='d' style='height:35px'>Waleed</td><td class='d' style='height:35px'>0c:54:15:36:4b:29</td><td class='d' style='height:35px'>192.168.1.40</td><td class='d' style='height:35px'>83749</td><td class='d' style='height:35px'>Wireless</td></tr><tr style='height:35px'><td class='d' style='height:35px'>unknow</td><td class='d' style='height:35px'>9e:b8:4e:ee:62:2f</td><td class='d' style='height:35px'>192.168.1.33</td><td class='d' style='height:35px'>82655</td><td class='d' style='height:35px'>Wireless</td></tr><tr style='height:35px'><td class='d' style='height:35px'>REDMI-A3</td><td class='d' style='height:35px'>0e:f1:44:83:c9:7a</td><td class='d' style='height:35px'>192.168.1.38</td><td class='d' style='height:35px'>82959</td><td class='d' style='height:35px'>Wireless</td></tr><tr style='height:35px'><td class='d' style='height:35px'>unknow</td><td class='d' style='height:35px'>74:c1:7d:aa:a2:f7</td><td class='d' style='height:35px'>192.168.1.34</td><td class='d' style='height:35px'>82388</td><td class='d' style='height:35px'>Wireless</td></tr><tr style='height:35px'><td class='d' style='height:35px'>unknow</td><td class='d' style='height:35px'>4e:67:4b:c8:1b:34</td><td class='d' style='height:35px'>192.168.1.35</td><td class='d' style='height:35px'>53847</td><td class='d' style='height:35px'>Wireless</td></tr><tr style='height:35px'><td class='d' style='height:35px'>OPPO-A5s</td><td class='d' style='height:35px'>44:ae:ab:6b:3b:89</td><td class='d' style='height:35px'>192.168.1.36</td><td class='d' style='height:35px'>79965</td><td class='d' style='height:35px'>Wireless</td></tr><tr style='height:35px'><td class='d' style='height:35px'>REDMI-A3</td><td class='d' style='height:35px'>92:68:dd:04:32:eb</td><td class='d' style='height:35px'>192.168.1.37</td><td class='d' style='height:35px'>83970</td><td class='d' style='height:35px'>Wireless</td></tr></table><div class='ttl' style='left:55px;top:651.77px'>Active DHCPv6 Clients</div><table class='t' style='left:55px;top:689px;width:1018px;padding-bottom:12px'><colgroup><col style='width:445px'><col style='width:180px'><col style='width:385px'></colgroup><tr style='height:29px'><td class='h' style='height:29px'>IPv6 Address</td><td class='h' style='height:29px'>DUID</td><td class='h' style='height:29px'>Lease Time</td></tr></table><div class='a' style='left:1073px;top:0;width:19px;height:724px;background:#fcfcfc'></div><svg class='a' style='left:1075px;top:5px' width='15' height='12' viewBox='0 0 15 12'><path d='M7.5 1.5 L13.5 10.5 L1.5 10.5Z' fill='#8a8a8a' stroke='#8a8a8a' stroke-width='1.5' stroke-linejoin='round'/></svg><div class='a' style='left:1077px;top:215px;width:11px;height:487px;border-radius:5.5px;background:#8a8a8a'></div><svg class='a' style='left:1075px;top:709px' width='15' height='12' viewBox='0 0 15 12'><path d='M7.5 10.5 L13.5 1.5 L1.5 1.5Z' fill='#8a8a8a' stroke='#8a8a8a' stroke-width='1.5' stroke-linejoin='round'/></svg></div></body></html>
